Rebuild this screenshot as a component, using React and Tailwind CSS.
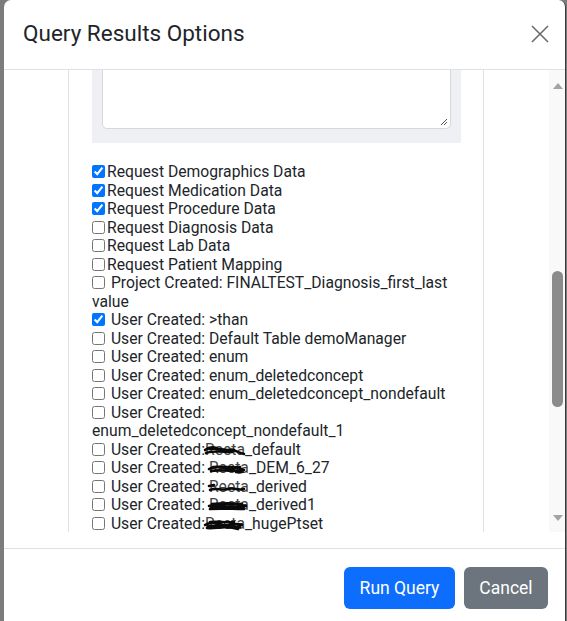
import React from "react";

const font = { fontFamily: "Roboto, 'Liberation Sans', sans-serif" };

const requestRows = [
  { label: "Request Demographics Data", checked: true },
  { label: "Request Medication Data", checked: true },
  { label: "Request Procedure Data", checked: true },
  { label: "Request Diagnosis Data", checked: false },
  { label: "Request Lab Data", checked: false },
  { label: "Request Patient Mapping", checked: false },
];

const createdRows = [
  { label: "Project Created: FINALTEST_Diagnosis_first_last value", checked: false },
  { label: "User Created: >than", checked: true },
  { label: "User Created: Default Table demoManager", checked: false },
  { label: "User Created: enum", checked: false },
  { label: "User Created: enum_deletedconcept", checked: false },
  { label: "User Created: enum_deletedconcept_nondefault", checked: false },
  { label: "User Created: enum_deletedconcept_nondefault_1", checked: false },
];

// hand scribbles that cover the redacted name
const scribbles = [
  "M1 6 C6 2 12 3 16 6 C20 9 26 4 30 6 C33 8 36 9 40 10 M2 9 C10 6 20 8 28 8 M6 5 C14 4 22 6 32 7",
  "M1 7 C6 4 12 5 18 6 C24 7 30 4 34 7 C37 10 32 11 28 10 M3 9 C12 7 22 10 36 8 M5 5 C14 4 24 6 32 5",
  "M2 9 C8 6 14 10 20 8 C26 6 30 10 36 8 M1 5 L6 4",
  "M1 7 C8 5 16 6 24 5 C30 5 34 7 38 7 M2 10 C12 9 24 10 36 10 M4 5 C14 4 24 4 34 5 M3 8 L36 8",
  "M1 7 C6 3 12 5 18 7 C24 9 30 4 38 7 M3 10 C12 11 22 7 34 11 M6 4 C14 3 22 5 30 4 M4 8 C14 7 26 9 36 9",
];

const redacted = [
  { suffix: "_default", nospace: true },
  { suffix: "_DEM_6_27" },
  { suffix: "_derived" },
  { suffix: "_derived1" },
  { suffix: "_hugePtset", nospace: true },
];

function Box({ checked }) {
  return (
    <input
      type="checkbox"
      defaultChecked={checked}
      className="m-0 mr-[2px] w-[13px] h-[13px] align-[-1px] accent-[#0075ff]"
    />
  );
}

function Redacted({ i, suffix, nospace }) {
  return (
    <div>
      <Box checked={false} /> User Created:{nospace ? "" : " "}
      <span className="relative inline-block">
        <span className="text-[#444]">Reeta</span>
        <svg
          viewBox="0 0 40 14"
          className="absolute left-[-3px] top-[3px] w-[44px] h-[14px]"
          fill="none"
        >
          <path d={scribbles[i]} stroke="#0a0a0a" strokeWidth="2.6" strokeLinecap="round" />
        </svg>
      </span>
      {suffix}
    </div>
  );
}

function Scrollbar() {
  return (
    <div className="w-[16px] bg-[#f9f9f9] flex flex-col items-center">
      <svg width="10" height="6" className="mt-[13px] ml-[2px]" viewBox="0 0 10 6">
        <path d="M0 6 L5 0 L10 6 Z" fill="#a3a3a3" />
      </svg>
      <div className="flex-1 w-full flex flex-col">
        <div className="h-[182px]" />
        <div className="ml-[3px] w-[11px] h-[136px] rounded-full bg-[#8b8b8b]" />
      </div>
      <svg width="10" height="6" className="mb-[11px] ml-[2px]" viewBox="0 0 10 6">
        <path d="M0 0 L10 0 L5 6 Z" fill="#a3a3a3" />
      </svg>
    </div>
  );
}

export default function App() {
  return (
    <div className="w-[567px] h-[621px] bg-[#7c7c7c] flex pl-[4px] pr-[1px] overflow-hidden" style={font}>
      <div className="flex-1 bg-white rounded-t-[7px] flex flex-col border-r border-[#3a3a3a]">
        {/* Header */}
        <div className="h-[70px] shrink-0 border-b border-[#dee2e6] flex items-center justify-between pl-[19px] pr-[16px]">
          <h5 className="text-[22.5px] text-[#212529] leading-none pb-[2px]">Query Results Options</h5>
          <svg width="18" height="18" viewBox="0 0 18 18" className="mt-[-2px]">
            <path d="M1 1 L17 17 M17 1 L1 17" stroke="#6b6b6b" strokeWidth="1.6" />
          </svg>
        </div>

        {/* Body */}
        <div className="h-[478px] shrink-0 pb-[16px] flex">
          <div className="flex-1 flex overflow-hidden">
            <div className="ml-[64px] w-[416px] border-x border-[#dee2e6] pl-[23px] pr-[22px] text-[15.7px] leading-[18.5px] text-[#212529]">
              <div className="h-[73px] bg-[#eff0f4] flex flex-col justify-end overflow-hidden pl-[10px] pr-[10px] pb-[14px]">
                <div className="h-[120px] shrink-0 bg-white border border-[#d6d8dc] rounded-[5px] relative">
                  <svg width="8" height="8" viewBox="0 0 8 8" className="absolute right-[2px] bottom-[2px]">
                    <path d="M7 1 L1 7 M7 4 L4 7" stroke="#555" strokeWidth="1" />
                  </svg>
                </div>
              </div>
              <div className="mt-[20px]">
                {requestRows.map((r) => (
                  <div key={r.label}>
                    <Box checked={r.checked} />
                    {r.label}
                  </div>
                ))}
                {createdRows.map((r) => (
                  <div key={r.label}>
                    <Box checked={r.checked} /> {r.label}
                  </div>
                ))}
                {redacted.map((r, i) => (
                  <Redacted key={r.suffix} i={i} suffix={r.suffix} nospace={r.nospace} />
                ))}
              </div>
            </div>
          </div>
          <Scrollbar />
        </div>

        {/* Footer */}
        <div className="flex-1 border-t border-[#dee2e6] flex justify-end items-start pt-[18px] pr-[17px] gap-[9px]">
          <button className="h-[42px] w-[111px] rounded-[6px] bg-[#0d6efd] text-white text-[17.5px]">
            Run Query
          </button>
          <button className="h-[42px] w-[84px] rounded-[6px] bg-[#6c757d] text-white text-[17.5px]">
            Cancel
          </button>
        </div>
      </div>
    </div>
  );
}
